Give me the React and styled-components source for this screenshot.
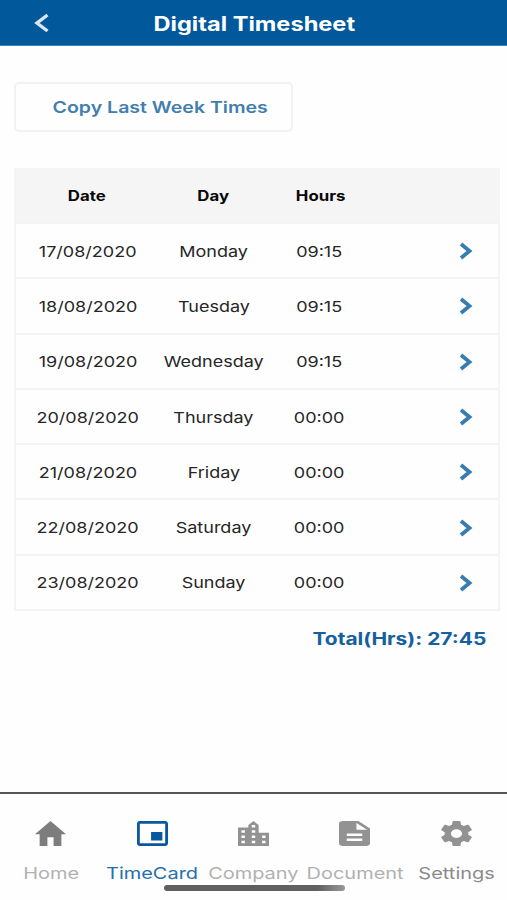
import styled, { createGlobalStyle } from 'styled-components'

const days = [
	{ date: '17/08/2020', day: 'Monday', hours: '09:15' },
	{ date: '18/08/2020', day: 'Tuesday', hours: '09:15' },
	{ date: '19/08/2020', day: 'Wednesday', hours: '09:15' },
	{ date: '20/08/2020', day: 'Thursday', hours: '00:00' },
	{ date: '21/08/2020', day: 'Friday', hours: '00:00' },
	{ date: '22/08/2020', day: 'Saturday', hours: '00:00' },
	{ date: '23/08/2020', day: 'Sunday', hours: '00:00' },
]

const tabs = [
	{
		label: 'Home',
		color: '#b1b1b1',
		icon: '#7d7d7d',
		box: '2 3 20 17',
		path: 'M10 20v-6h4v6h5v-8h3L12 3 2 12h3v8z',
	},
	{
		label: 'TimeCard',
		color: '#2470ad',
		icon: '#07589e',
		box: '1 3 22 18',
		path: 'M19 11h-8v6h8v-6zm4 8V4.98C23 3.88 22.1 3 21 3H3c-1.1 0-2 .88-2 1.98V19c0 1.1.9 2 2 2h18c1.1 0 2-.9 2-2zm-2 .02H3V4.97h18v14.05z',
	},
	{
		label: 'Company',
		color: '#b1b1b1',
		icon: '#929292',
		box: '3 2 18 19',
		path: 'M15 11V5l-3-3-3 3v2H3v14h18V11h-6zm-8 8H5v-2h2v2zm0-4H5v-2h2v2zm0-4H5V9h2v2zm6 8h-2v-2h2v2zm0-4h-2v-2h2v2zm0-4h-2V9h2v2zm0-4h-2V5h2v2zm6 12h-2v-2h2v2zm0-4h-2v-2h2v2z',
	},
	{
		label: 'Document',
		color: '#b1b1b1',
		icon: '#929292',
		box: '4 2 16 20',
		path: 'M14 2H6c-1.1 0-2 .9-2 2v16c0 1.1.9 2 2 2h12c1.1 0 2-.9 2-2V8l-6-6zm2 16H8v-2h8v2zm0-4H8v-2h8v2zm-3-5V3.5L18.5 9H13z',
	},
	{
		label: 'Settings',
		color: '#8b8b8b',
		icon: '#929292',
		box: '2.2 2 19.6 20',
		path: 'M19.43 12.98c.04-.32.07-.64.07-.98s-.03-.66-.07-.98l2.11-1.65c.19-.15.24-.42.12-.64l-2-3.46c-.12-.22-.39-.3-.61-.22l-2.49 1c-.52-.4-1.08-.73-1.69-.98l-.38-2.65C14.46 2.18 14.25 2 14 2h-4c-.25 0-.46.18-.49.42l-.38 2.65c-.61.25-1.17.59-1.69.98l-2.49-1c-.23-.09-.49 0-.61.22l-2 3.46c-.13.22-.07.49.12.64l2.11 1.65c-.04.32-.07.65-.07.98s.03.66.07.98l-2.11 1.65c-.19.15-.24.42-.12.64l2 3.46c.12.22.39.3.61.22l2.49-1c.52.4 1.08.73 1.69.98l.38 2.65c.03.24.24.42.49.42h4c.25 0 .46-.18.49-.42l.38-2.65c.61-.25 1.17-.59 1.69-.98l2.49 1c.23.09.49 0 .61-.22l2-3.46c.12-.22.07-.49-.12-.64l-2.11-1.65zM12 15.5c-1.93 0-3.5-1.57-3.5-3.5s1.57-3.5 3.5-3.5 3.5 1.57 3.5 3.5-1.57 3.5-3.5 3.5z',
	},
]

export default function App() {
	return (
		<Screen>
			<GlobalStyle />
			<Header>
				<BackIcon viewBox='0 0 16 20'>
					<path d='M13.5 2 3 10l10.5 8' />
				</BackIcon>
				<Title>Digital Timesheet</Title>
			</Header>
			<Main>
				<CopyButton>
					<Wide $x={1.22}>Copy Last Week Times</Wide>
				</CopyButton>
				<Table>
					<HeadRow>
						<Wide $x={1.2}>Date</Wide>
						<Wide $x={1.2}>Day</Wide>
						<Wide $x={1.2}>Hours</Wide>
					</HeadRow>
					{days.map(({ date, day, hours }) => (
						<Row key={date}>
							<Wide $x={1.2}>{date}</Wide>
							<Wide $x={1.2}>{day}</Wide>
							<Wide $x={1.2}>{hours}</Wide>
							<Chevron viewBox='0 0 14 18'>
								<path d='M2 2 10.5 9 2 16' />
							</Chevron>
						</Row>
					))}
				</Table>
				<Total>Total(Hrs): 27:45</Total>
			</Main>
			<TabBar>
				{tabs.map(({ label, color, icon, box, path }) => (
					<Tab key={label} $color={color}>
						<TabIcon viewBox={box} preserveAspectRatio='none' fill={icon}>
							<path d={path} />
						</TabIcon>
						<Wide $x={1.21}>{label}</Wide>
					</Tab>
				))}
				<HomeIndicator />
			</TabBar>
		</Screen>
	)
}

const GlobalStyle = createGlobalStyle`
	* {
		box-sizing: border-box;
	}

	body {
		margin: 0;
		background: #fefefe;
		font-family: Inter, 'Liberation Sans', sans-serif;
	}
`

const Wide = styled.span`
	display: block;
	white-space: nowrap;
	transform: scaleX(${({ $x }) => $x});
`

const Screen = styled.div`
	display: flex;
	flex-direction: column;
	height: 900px;
	overflow: hidden;
`

const Header = styled.header`
	display: grid;
	grid-template-columns: 85px 1fr 84px;
	align-items: center;
	height: 46px;
	padding-top: 1px;
	background: #01589b;
	border-bottom: 1px solid #3d83b7;
`

const BackIcon = styled.svg`
	width: 16px;
	height: 20px;
	margin-left: 34px;
	fill: none;
	stroke: #d9e6f0;
	stroke-width: 3.4;
`

const Title = styled.h1`
	justify-self: center;
	margin: 1px 0 0;
	font-size: 19.5px;
	line-height: 24px;
	font-weight: 700;
	color: #fff;
	white-space: nowrap;
	transform: scaleX(1.21);
`

const Main = styled.main`
	flex: 1;
	display: flex;
	flex-direction: column;
	align-items: flex-start;
	padding: 36px 7px 0 14px;
`

const CopyButton = styled.button`
	display: flex;
	justify-content: center;
	align-items: center;
	width: 279px;
	height: 50px;
	padding: 0 0 0 13px;
	border: 2px solid #f2f2f2;
	border-radius: 5px;
	background: #fefefe;
	font: 600 16px/20px Inter, sans-serif;
	color: #427eae;
`

const Table = styled.section`
	width: 100%;
	margin-top: 36px;
`

const Row = styled.div`
	display: grid;
	grid-template-columns: 144px 107px 105px 1fr;
	align-items: center;
	justify-items: center;
	height: 55.3px;
	padding-top: 1px;
	border: 2px solid #f4f4f4;
	border-top: 0;
	font-size: 15px;
	color: #262626;
`

const HeadRow = styled(Row)`
	grid-template-columns: 141px 112px 104px 1fr;
	height: 56px;
	background: #f5f5f5;
	font-size: 14px;
	font-weight: 700;
	color: #080808;
`

const Chevron = styled.svg`
	justify-self: end;
	width: 14px;
	height: 18px;
	margin-right: 25px;
	fill: none;
	stroke: #397caf;
	stroke-width: 3.8;
`

const Total = styled.p`
	align-self: flex-end;
	margin: 16px 14px 0 0;
	font-size: 17px;
	line-height: 24px;
	font-weight: 700;
	color: #15609f;
	transform: scaleX(1.23);
	transform-origin: right;
`

const TabBar = styled.nav`
	position: relative;
	display: grid;
	grid-template-columns: repeat(5, 1fr);
	height: 108px;
	border-top: 2px solid #555;
`

const Tab = styled.div`
	display: flex;
	flex-direction: column;
	align-items: center;
	min-width: 0;
	padding-top: 27px;
	font-size: 16.5px;
	line-height: 24px;
	color: ${({ $color }) => $color};
`

const TabIcon = styled.svg`
	flex: none;
	width: 31px;
	height: 25px;
	margin-bottom: 15px;
`

const HomeIndicator = styled.div`
	position: absolute;
	left: 164px;
	bottom: 9px;
	width: 181px;
	height: 6px;
	border-radius: 3px;
	background: linear-gradient(90deg, #606060 0%, #606060 85%, #999 100%);
`
